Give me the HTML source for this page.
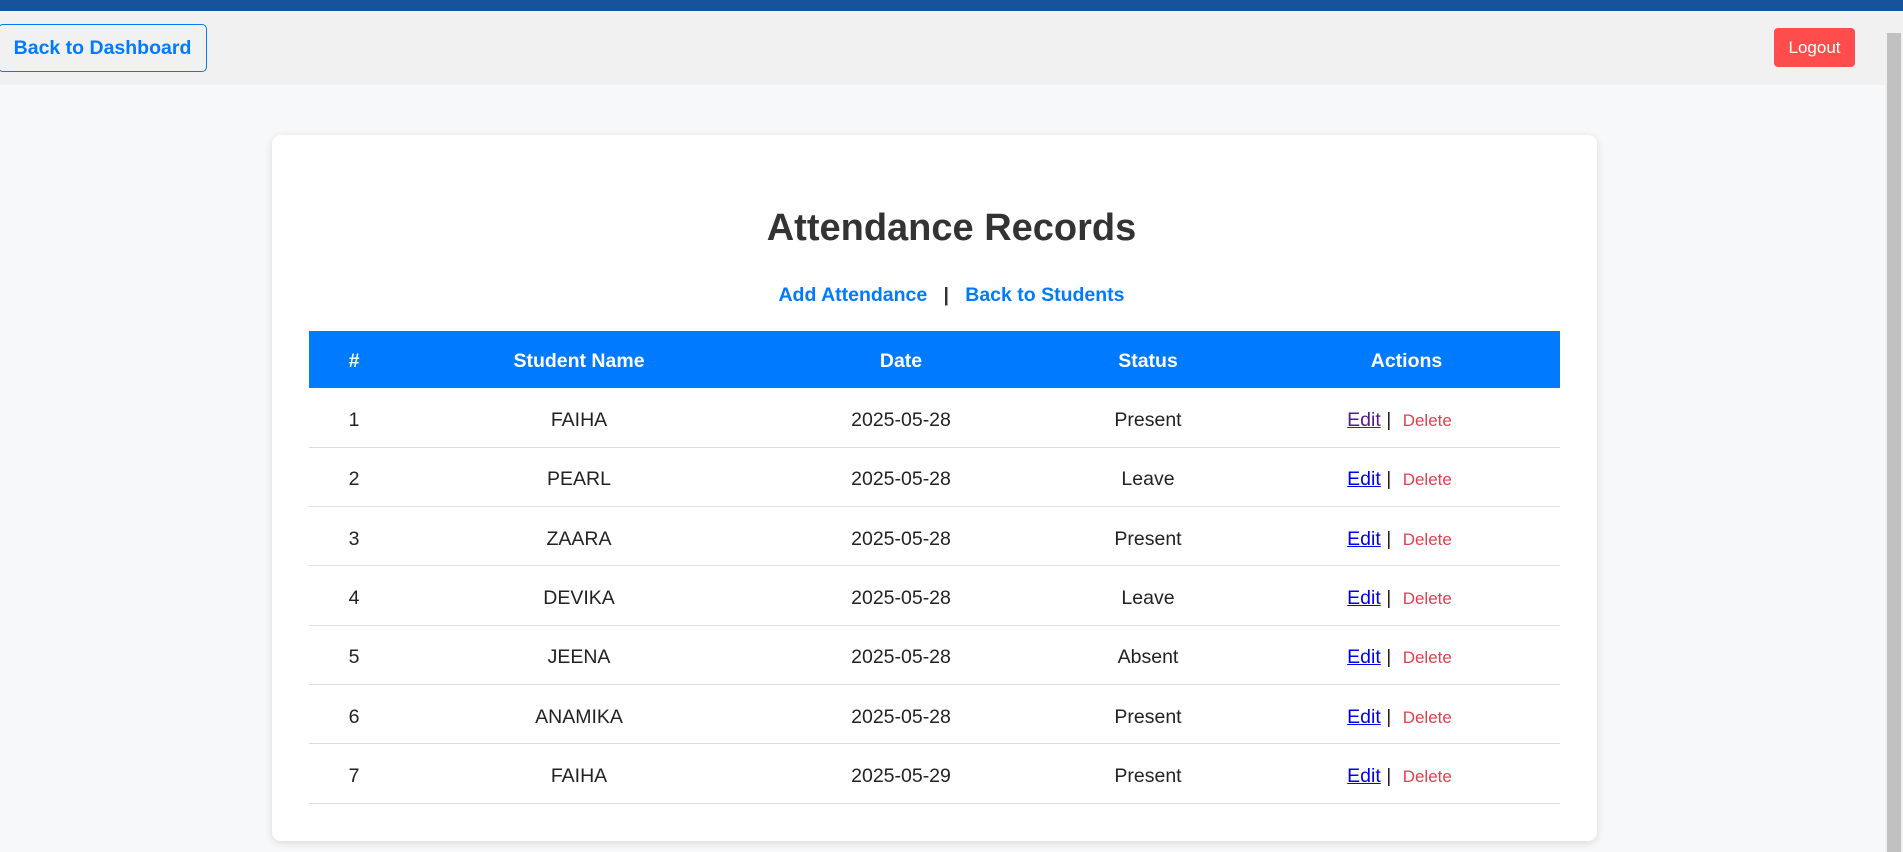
<!DOCTYPE html>
<html><head><meta charset="utf-8"><style>
*{box-sizing:border-box;margin:0;padding:0}
body{width:1903px;height:852px;overflow:hidden;background:#f7f8fa;font-family:"Liberation Sans",sans-serif;position:relative}
.top{position:absolute;left:0;top:0;width:1903px;height:11px;background:#16539b}
.hdr{position:absolute;left:0;top:11px;width:1885px;height:74px;background:#f1f1f1}
.back{position:absolute;left:-2px;top:24px;width:209px;height:48px;border:1.5px solid #007bff;border-radius:5px;color:#007bff;font-weight:bold;font-size:19.5px;line-height:47px;text-align:center}
.logout{position:absolute;left:1774px;top:28px;width:81px;height:39px;background:#ff4d4d;border-radius:4px;color:#fff;font-size:17px;line-height:40px;text-align:center}
.sb{position:absolute;left:1885px;top:11px;width:18px;height:841px;background:#f1f1f1}
.sb div{position:absolute;left:2px;top:22px;width:14px;height:819px;background:#c1c1c1}
.card{position:absolute;left:272px;top:135px;width:1325px;height:706px;background:#fff;border-radius:9px;box-shadow:0 2px 8px rgba(0,0,0,.12)}
h1{position:absolute;left:0;width:100%;top:202px;text-align:center;font-size:38px;font-weight:bold;color:#333;line-height:52px}
.links{position:absolute;left:0;width:100%;top:283px;text-align:center;font-size:19.5px;font-weight:bold;color:#333;line-height:24px}
.links a{color:#007bff;text-decoration:none}
table{position:absolute;left:309px;top:331px;width:1251px;border-collapse:collapse;font-size:19.5px;color:#222}
th{background:#007bff;color:#fff;font-weight:bold;height:57px;text-align:center;padding-top:4px}
td{height:59.3px;text-align:center;border-bottom:1.5px solid #ddd;padding-top:6px}
td a.e{color:#0000ee;text-decoration:underline}
td a.v{color:#551a8b}
td .d{color:#e0404f;font-size:17px;margin-left:6px}
td.ac{padding-right:14px}
</style></head><body>
<div class="top"></div>
<div class="hdr"></div>
<div class="back">Back to Dashboard</div>
<div class="logout">Logout</div>
<div class="sb"><div></div></div>
<div class="card"></div>
<h1>Attendance Records</h1>
<div class="links"><a>Add Attendance</a> &nbsp; | &nbsp; <a>Back to Students</a></div>
<table>
<colgroup><col style="width:90px"><col style="width:360px"><col style="width:284px"><col style="width:210px"><col style="width:307px"></colgroup>
<tr><th>#</th><th>Student Name</th><th>Date</th><th>Status</th><th>Actions</th></tr>
<tr><td>1</td><td>FAIHA</td><td>2025-05-28</td><td>Present</td><td class="ac"><a class="e v">Edit</a> | <span class="d">Delete</span></td></tr>
<tr><td>2</td><td>PEARL</td><td>2025-05-28</td><td>Leave</td><td class="ac"><a class="e">Edit</a> | <span class="d">Delete</span></td></tr>
<tr><td>3</td><td>ZAARA</td><td>2025-05-28</td><td>Present</td><td class="ac"><a class="e">Edit</a> | <span class="d">Delete</span></td></tr>
<tr><td>4</td><td>DEVIKA</td><td>2025-05-28</td><td>Leave</td><td class="ac"><a class="e">Edit</a> | <span class="d">Delete</span></td></tr>
<tr><td>5</td><td>JEENA</td><td>2025-05-28</td><td>Absent</td><td class="ac"><a class="e">Edit</a> | <span class="d">Delete</span></td></tr>
<tr><td>6</td><td>ANAMIKA</td><td>2025-05-28</td><td>Present</td><td class="ac"><a class="e">Edit</a> | <span class="d">Delete</span></td></tr>
<tr><td>7</td><td>FAIHA</td><td>2025-05-29</td><td>Present</td><td class="ac"><a class="e">Edit</a> | <span class="d">Delete</span></td></tr>
</table>
</body></html>
